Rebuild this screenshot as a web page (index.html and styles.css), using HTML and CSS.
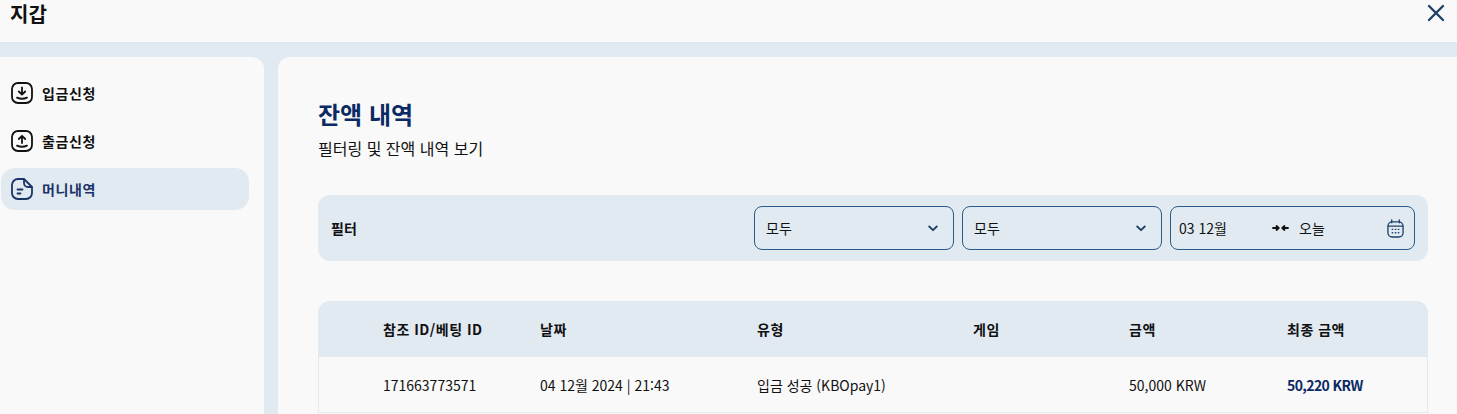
FILE: index.html
```html
<!DOCTYPE html>
<html lang="ko">
  <head>
    <meta charset="UTF-8" />
    <meta name="viewport" content="width=device-width, initial-scale=1.0" />
    <title>지갑</title>
    <link rel="stylesheet" href="styles.css">
  </head>
  <body>
    <div class="topbar">
      <h3 class="topbar-title">지갑</h3>
      <svg class="close-icon" width="24" height="24" viewBox="0 0 24 24" fill="none" stroke="#1d4268" stroke-width="2.4" stroke-linecap="round">
        <path d="M5 5L19 19M19 5L5 19" />
      </svg>
    </div>
    <div class="wallet">
      <div class="sidebar">
        <div class="nav-item">
          <svg class="nav-icon" width="24" height="24" viewBox="0 0 24 24" fill="none" stroke="currentColor" stroke-width="1.8" stroke-linecap="round" stroke-linejoin="round">
            <rect x="2" y="2" width="20" height="20" rx="6" />
            <path d="M12 6.5V13.5M8.8 10.5L12 13.7L15.2 10.5M7 16.6C10 18 14 18 17 16.6" />
          </svg>
          <span>입금신청</span>
        </div>
        <div class="nav-item">
          <svg class="nav-icon" width="24" height="24" viewBox="0 0 24 24" fill="none" stroke="currentColor" stroke-width="1.8" stroke-linecap="round" stroke-linejoin="round">
            <rect x="2" y="2" width="20" height="20" rx="6" />
            <path d="M12 14V7M8.8 10L12 6.8L15.2 10M7 16.6C10 18 14 18 17 16.6" />
          </svg>
          <span>출금신청</span>
        </div>
        <div class="nav-item active">
          <svg class="nav-icon" width="24" height="24" viewBox="0 0 24 24" fill="none" stroke="currentColor" stroke-width="1.8" stroke-linecap="round" stroke-linejoin="round">
            <path d="M14 2H8A6 6 0 0 0 2 8V16A6 6 0 0 0 8 22H16A6 6 0 0 0 22 16V10L14 2Z" />
            <path d="M14 2.5V6A4 4 0 0 0 18 10H21.5" />
            <path d="M7.5 12.5H12.5M7.5 16.5H10.5" />
          </svg>
          <span>머니내역</span>
        </div>
      </div>
      <div class="main">
        <h1 class="page-title">잔액 내역</h1>
        <p class="page-sub">필터링 및 잔액 내역 보기</p>
        <div class="filter-bar">
          <span class="filter-label">필터</span>
          <div class="filter-controls">
            <div class="select-box">
              <span>모두</span>
              <svg width="10" height="7" viewBox="0 0 10 7" fill="none" stroke="#1d4268" stroke-width="1.8" stroke-linecap="round" stroke-linejoin="round">
                <path d="M1.2 1.5L5 5.2L8.8 1.5" />
              </svg>
            </div>
            <div class="select-box">
              <span>모두</span>
              <svg width="10" height="7" viewBox="0 0 10 7" fill="none" stroke="#1d4268" stroke-width="1.8" stroke-linecap="round" stroke-linejoin="round">
                <path d="M1.2 1.5L5 5.2L8.8 1.5" />
              </svg>
            </div>
            <div class="date-box">
              <span class="date-from">03 12월</span>
              <svg class="date-arrows" width="17" height="8" viewBox="0 0 17 8" fill="none" stroke="#111" stroke-width="1.8" stroke-linecap="round" stroke-linejoin="round">
                <path d="M1 4H6.5M4.5 2L6.8 4L4.5 6M16 4H10.5M12.5 2L10.2 4L12.5 6" />
              </svg>
              <span class="date-to">오늘</span>
              <svg class="calendar-icon" width="17" height="19" viewBox="0 0 18 20" fill="none" stroke="#1d4268" stroke-width="1.4" stroke-linecap="round">
                <rect x="1" y="3" width="16" height="16" rx="4.5" />
                <path d="M1.5 7.5H16.5M5 1V4M13 1V4" />
                <path d="M5.5 11H6M8.8 11H9.3M12 11H12.5M5.5 14.5H6M8.8 14.5H9.3M12 14.5H12.5" />
              </svg>
            </div>
          </div>
        </div>
        <table class="history-table">
          <colgroup>
            <col class="col-ref" />
            <col class="col-date" />
            <col class="col-type" />
            <col class="col-game" />
            <col class="col-amount" />
            <col />
          </colgroup>
          <thead>
            <tr>
              <th>참조 ID/베팅 ID</th>
              <th>날짜</th>
              <th>유형</th>
              <th>게임</th>
              <th>금액</th>
              <th>최종 금액</th>
            </tr>
          </thead>
          <tbody>
            <tr>
              <td>171663773571</td>
              <td>04 12월 2024 | 21:43</td>
              <td>입금 성공 (KBOpay1)</td>
              <td></td>
              <td>50,000 KRW</td>
              <td class="final-amount">50,220 KRW</td>
            </tr>
          </tbody>
        </table>
      </div>
    </div>
  </body>
</html>
```

FILE: styles.css
```css
* {
  margin: 0;
  padding: 0;
  box-sizing: border-box;
}
html,
body {
  height: 414px;
  overflow: hidden;
}
body {
  background-color: #e1e9f1;
  font-family: "Noto Sans CJK KR", "Noto Sans", sans-serif;
  color: #111;
}

.topbar {
  height: 43px;
  padding: 2px 9px 0 10px;
  background-color: #f9f9f9;
  display: flex;
  align-items: flex-start;
  justify-content: space-between;
  border-bottom: 1px solid #dfe5ec;
}
.topbar-title {
  font-size: 20px;
  line-height: 24px;
  font-weight: 700;
}
.close-icon {
  margin-top: -1px;
}

.wallet {
  display: flex;
  gap: 14px;
  padding-top: 14px;
}

.sidebar {
  width: 264px;
  height: 357px;
  padding: 15px 15px 0 1px;
  background-color: #f9f9f9;
  border-top-right-radius: 12px;
  display: flex;
  flex-direction: column;
  gap: 6px;
}
.nav-item {
  height: 42px;
  padding-left: 9px;
  display: flex;
  align-items: center;
  gap: 8px;
  border-radius: 14px;
  font-size: 14px;
  letter-spacing: 0.6px;
  font-weight: 700;
  color: #111;
}
.nav-item.active {
  background-color: #e1e9f1;
  color: #1b3468;
}

.main {
  flex: 1;
  height: 357px;
  padding: 40px 29px 0 40px;
  background-color: #f9f9f9;
  border-top-left-radius: 12px;
}
.page-title {
  font-size: 24px;
  line-height: 34px;
  font-weight: 700;
  color: #0b2a64;
}
.page-sub {
  font-size: 16px;
  line-height: 24px;
  margin-top: 5px;
}

.filter-bar {
  margin-top: 35px;
  height: 66px;
  padding: 0 13px;
  background-color: #e1e9f1;
  border-radius: 12px;
  display: flex;
  align-items: center;
  justify-content: space-between;
}
.filter-label {
  font-size: 14px;
  font-weight: 700;
}
.filter-controls {
  display: flex;
  gap: 8px;
}
.select-box {
  width: 200px;
  height: 44px;
  padding: 0 15px 0 11px;
  border: 1px solid #2b5c8a;
  border-radius: 8px;
  display: flex;
  align-items: center;
  justify-content: space-between;
  font-size: 14px;
}
.date-box {
  width: 245px;
  height: 44px;
  padding: 0 10px 0 8px;
  border: 1px solid #2b5c8a;
  border-radius: 8px;
  display: flex;
  align-items: center;
  font-size: 14px;
}
.date-from {
  width: 93px;
}
.date-arrows {
  margin-right: 10px;
}
.date-to {
  flex: 1;
}

.history-table {
  margin-top: 40px;
  width: 1110px;
  table-layout: fixed;
  border-collapse: separate;
  border-spacing: 0;
  font-size: 14px;
}
.col-ref {
  width: 222px;
}
.col-date {
  width: 217px;
}
.col-type {
  width: 216px;
}
.col-game {
  width: 156px;
}
.col-amount {
  width: 158px;
}
.history-table th {
  height: 56px;
  text-align: left;
  font-weight: 700;
  letter-spacing: 0.5px;
  background-color: #e1e9f1;
}
.history-table th:first-child {
  border-top-left-radius: 12px;
}
.history-table th:last-child {
  border-top-right-radius: 12px;
}
.history-table td {
  height: 56px;
  border-bottom: 1px solid #e6e9ed;
}
.history-table th:first-child {
  padding-left: 65px;
}
.history-table td:first-child {
  padding-left: 64px;
}
.history-table tbody tr td:first-child {
  border-left: 1px solid #e6e9ed;
}
.history-table tbody tr td:last-child {
  border-right: 1px solid #e6e9ed;
}
.final-amount {
  font-weight: 700;
  letter-spacing: -0.6px;
  color: #0b2a64;
}
```
